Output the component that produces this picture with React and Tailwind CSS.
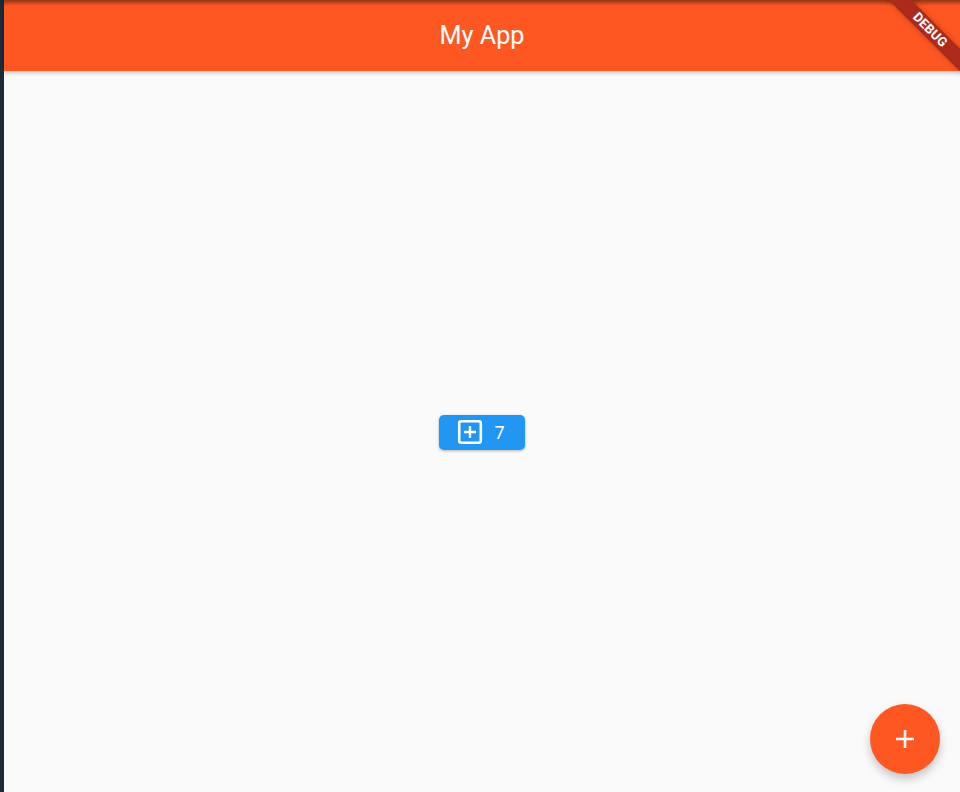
export default function App() {
  return (
    <div className="relative flex h-[792px] w-[960px] overflow-hidden bg-[#fafafa] font-['Roboto',sans-serif]">
      <div className="w-[4px] shrink-0 bg-[#1b2b3a]" />
      <div className="relative flex min-w-0 flex-1 flex-col">
        <header className="relative flex h-[71px] shrink-0 items-center justify-center bg-[#ff5722] shadow-[0_2px_4px_rgba(0,0,0,0.22)]">
          <div className="absolute inset-x-0 top-0 h-[6px] bg-gradient-to-b from-[rgba(0,0,0,0.42)] to-transparent" />
          <h1 className="pt-[1px] text-[25.2px] font-normal leading-[28px] text-white">My App</h1>
        </header>
        <main className="flex flex-1 items-center justify-center pt-[2px]">
          <button className="flex h-[35px] w-[86px] items-center rounded-[5px] bg-[#2196f3] pl-[18px] text-white shadow-[0_1px_3px_rgba(0,0,0,0.3)]">
            <svg width="26" height="26" viewBox="0 0 26 26" fill="none" stroke="white" className="-mt-[1px] -ml-[0.5px]">
              <rect x="2.2" y="2.2" width="21.6" height="21.6" rx="2" strokeWidth="2.6" />
              <path d="M13 7V19M7 13H19" strokeWidth="2.4" />
            </svg>
            <span className="ml-[12px] text-[18px] leading-[20px]">7</span>
          </button>
        </main>
        <button className="absolute bottom-[18px] right-[20px] flex h-[70px] w-[70px] items-center justify-center rounded-full bg-[#ff5722] text-white shadow-[0_5px_10px_rgba(0,0,0,0.22)]">
          <svg width="18" height="18" viewBox="0 0 18 18" fill="none" stroke="white" strokeWidth="2.6">
            <path d="M9 0V18M0 9H18" />
          </svg>
        </button>
      </div>
      <div className="absolute left-[870px] top-[22px] flex h-[16px] w-[120px] rotate-45 items-center justify-center bg-[#ab2a1b] shadow-[0_0_6px_rgba(0,0,0,0.25)]">
        <span className="text-[13px] font-bold leading-[16px] tracking-[0.2px] text-white">DEBUG</span>
      </div>
    </div>
  );
}
